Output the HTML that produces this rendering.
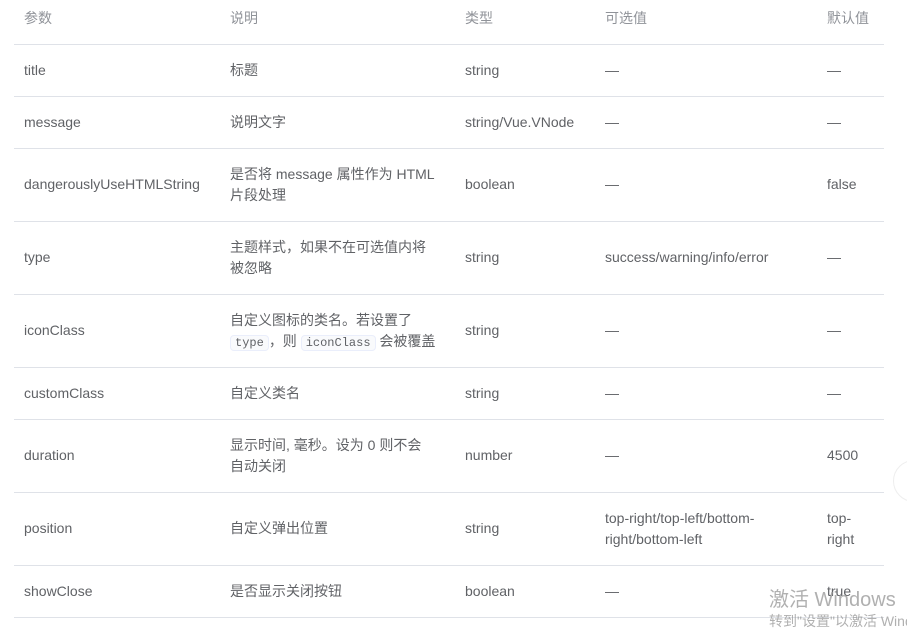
<!DOCTYPE html>
<html><head><meta charset="utf-8"><style>
body{margin:0;width:907px;height:625px;overflow:hidden;background:#fff;position:relative;font-family:"Liberation Sans","Noto Sans CJK SC",sans-serif;font-size:14px;color:#606266}
.l{position:absolute;left:14px;width:870px;height:1px;background:#dfe2e8}
.t{position:absolute;line-height:21px;white-space:nowrap}
.h{color:#909399}
code{font-family:"Liberation Mono",monospace;font-size:12px;background:#f9fafc;border:1px solid #eaeefb;border-radius:4px;padding:0 4px;color:#606266}
</style></head><body>
<div class="t h" style="left:24px;top:8px">参数</div>
<div class="t h" style="left:230px;top:8px">说明</div>
<div class="t h" style="left:465px;top:8px">类型</div>
<div class="t h" style="left:605px;top:8px">可选值</div>
<div class="t h" style="left:827px;top:8px">默认值</div>
<div class="l" style="top:44px"></div>
<div class="l" style="top:96px"></div>
<div class="l" style="top:148px"></div>
<div class="l" style="top:221px"></div>
<div class="l" style="top:294px"></div>
<div class="l" style="top:367px"></div>
<div class="l" style="top:419px"></div>
<div class="l" style="top:492px"></div>
<div class="l" style="top:565px"></div>
<div class="l" style="top:617px"></div>

<div class="t" style="left:24px;top:60px">title</div><div class="t" style="left:230px;top:60px">标题</div><div class="t" style="left:465px;top:60px">string</div><div class="t" style="left:605px;top:60px">—</div><div class="t" style="left:827px;top:60px">—</div>

<div class="t" style="left:24px;top:112px">message</div><div class="t" style="left:230px;top:112px">说明文字</div><div class="t" style="left:465px;top:112px">string/Vue.VNode</div><div class="t" style="left:605px;top:112px">—</div><div class="t" style="left:827px;top:112px">—</div>

<div class="t" style="left:24px;top:174px">dangerouslyUseHTMLString</div><div class="t" style="left:230px;top:164px">是否将 message 属性作为 HTML<br>片段处理</div><div class="t" style="left:465px;top:174px">boolean</div><div class="t" style="left:605px;top:174px">—</div><div class="t" style="left:827px;top:174px">false</div>

<div class="t" style="left:24px;top:247px">type</div><div class="t" style="left:230px;top:237px">主题样式，如果不在可选值内将<br>被忽略</div><div class="t" style="left:465px;top:247px">string</div><div class="t" style="left:605px;top:247px">success/warning/info/error</div><div class="t" style="left:827px;top:247px">—</div>

<div class="t" style="left:24px;top:320px">iconClass</div><div class="t" style="left:230px;top:310px">自定义图标的类名。若设置了<br><code>type</code>，则 <code>iconClass</code> 会被覆盖</div><div class="t" style="left:465px;top:320px">string</div><div class="t" style="left:605px;top:320px">—</div><div class="t" style="left:827px;top:320px">—</div>

<div class="t" style="left:24px;top:383px">customClass</div><div class="t" style="left:230px;top:383px">自定义类名</div><div class="t" style="left:465px;top:383px">string</div><div class="t" style="left:605px;top:383px">—</div><div class="t" style="left:827px;top:383px">—</div>

<div class="t" style="left:24px;top:445px">duration</div><div class="t" style="left:230px;top:435px">显示时间, 毫秒。设为 0 则不会<br>自动关闭</div><div class="t" style="left:465px;top:445px">number</div><div class="t" style="left:605px;top:445px">—</div><div class="t" style="left:827px;top:445px">4500</div>

<div class="t" style="left:24px;top:518px">position</div><div class="t" style="left:230px;top:518px">自定义弹出位置</div><div class="t" style="left:465px;top:518px">string</div><div class="t" style="left:605px;top:508px">top-right/top-left/bottom-<br>right/bottom-left</div><div class="t" style="left:827px;top:508px">top-<br>right</div>

<div class="t" style="left:24px;top:581px">showClose</div><div class="t" style="left:230px;top:581px">是否显示关闭按钮</div><div class="t" style="left:465px;top:581px">boolean</div><div class="t" style="left:605px;top:581px">—</div><div class="t" style="left:827px;top:581px">true</div>

<div style="position:absolute;left:893px;top:460px;width:40px;height:40px;border-radius:50%;border:1px solid #eee;background:#fff"></div>
<div class="t" style="left:769px;top:587px;font-size:20px;line-height:26px;color:rgba(150,150,150,.75)">激活 Windows</div>
<div class="t" style="left:769px;top:611px;font-size:14px;color:rgba(150,150,150,.75)">转到"设置"以激活 Windows。</div>
</body></html>
